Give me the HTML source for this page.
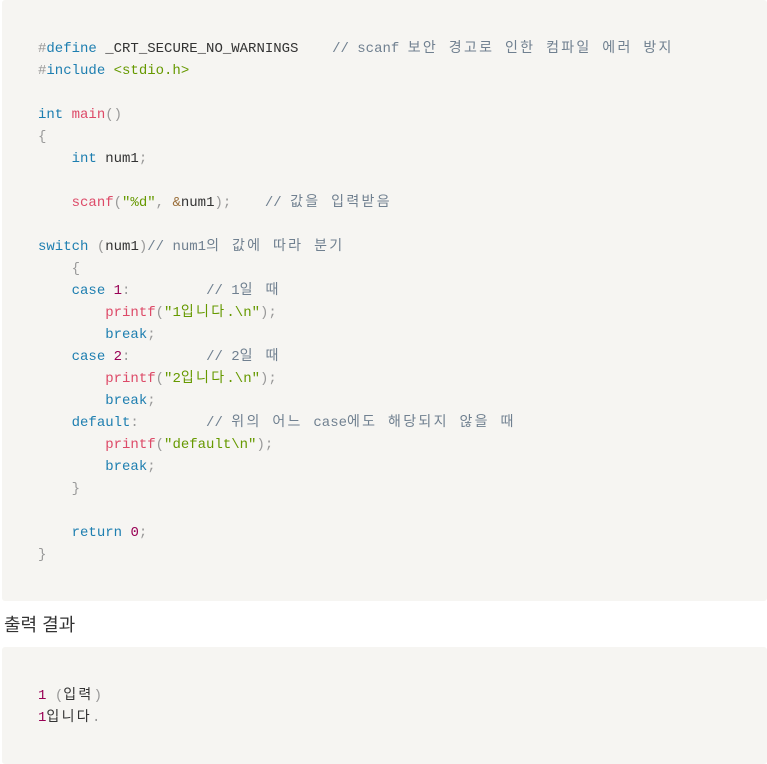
<!DOCTYPE html>
<html><head><meta charset="utf-8"><style>
body{margin:0;background:#fff;width:767px;height:764px;overflow:hidden;position:relative}
pre{margin:0;position:absolute;left:2px;width:729px;background:#f6f5f2;border-radius:3px;padding:0 0 0 36px;font-family:"Liberation Mono","Noto Sans CJK KR",monospace;font-size:14px;line-height:22px;color:#333;white-space:pre}
i{font-style:normal;letter-spacing:2.3px}
.k{color:#1d7eb0}.f{color:#dd4a68}.s{color:#669900}.c{color:#708090}.p{color:#999}.n{color:#990055}.o{color:#9a6e3a}
h{position:absolute;left:4px;top:611px;font-family:"Liberation Sans","Noto Sans CJK KR",sans-serif;font-size:18px;color:#333}
</style></head><body>
<pre style="top:0;height:563px;padding-top:38px"><span class="p">#</span><span class="k">define</span> _CRT_SECURE_NO_WARNINGS    <span class="c">// scanf <i>보안 경고로 인한 컴파일 에러 방지</i></span>
<span class="p">#</span><span class="k">include</span> <span class="s">&lt;stdio.h&gt;</span>

<span class="k">int</span> <span class="f">main</span><span class="p">()</span>
<span class="p">{</span>
    <span class="k">int</span> num1<span class="p">;</span>

    <span class="f">scanf</span><span class="p">(</span><span class="s">"%d"</span><span class="p">,</span> <span class="o">&amp;</span>num1<span class="p">);</span>    <span class="c">// <i>값을 입력받음</i></span>

<span class="k">switch</span> <span class="p">(</span>num1<span class="p">)</span><span class="c">// num1<i>의 값에 따라 분기</i></span>
    <span class="p">{</span>
    <span class="k">case</span> <span class="n">1</span><span class="p">:</span>         <span class="c">// 1<i>일 때</i></span>
        <span class="f">printf</span><span class="p">(</span><span class="s">"1<i>입니다</i>.\n"</span><span class="p">);</span>
        <span class="k">break</span><span class="p">;</span>
    <span class="k">case</span> <span class="n">2</span><span class="p">:</span>         <span class="c">// 2<i>일 때</i></span>
        <span class="f">printf</span><span class="p">(</span><span class="s">"2<i>입니다</i>.\n"</span><span class="p">);</span>
        <span class="k">break</span><span class="p">;</span>
    <span class="k">default</span><span class="p">:</span>        <span class="c">// <i>위의 어느 </i>case<i>에도 해당되지 않을 때</i></span>
        <span class="f">printf</span><span class="p">(</span><span class="s">"default\n"</span><span class="p">);</span>
        <span class="k">break</span><span class="p">;</span>
    <span class="p">}</span>

    <span class="k">return</span> <span class="n">0</span><span class="p">;</span>
<span class="p">}</span></pre>
<h>출력 결과</h>
<pre style="top:647px;height:79px;padding-top:38px"><span class="n">1</span> <span class="p">(</span><i>입력</i><span class="p">)</span>
<span class="n">1</span><i>입니다</i><span class="p">.</span></pre>
</body></html>
